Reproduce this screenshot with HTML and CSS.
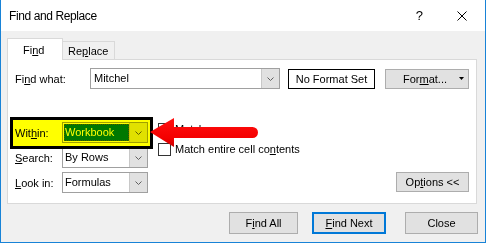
FILE: index.html
```html
<!DOCTYPE html>
<html lang="en">

<head>
    <meta charset="UTF-8">
    <meta name="viewport" content="width=device-width, initial-scale=1.0">
    <title>Find and Replace</title>
    <link rel="stylesheet" href="styles.css">
</head>

<body>
    <div class="window">
        <div class="titlebar">
            <span class="title">Find and Replace</span>
            <span class="help">?</span>
            <svg class="close-x" width="10" height="10" viewBox="0 0 10 10">
                <path d="M0.5 0.5 L9.5 9.5 M9.5 0.5 L0.5 9.5" stroke="#000" stroke-width="1" fill="none"/>
            </svg>
        </div>

        <div class="dialog">
            <div class="tabs">
                <div class="tab active">Fi<u>n</u>d</div>
                <div class="tab">Re<u>p</u>lace</div>
            </div>

            <div class="panel">
                <div class="find-row">
                    <span class="lbl lbl-wide">Fi<u>n</u>d what:</span>
                    <div class="combo combo-find">
                        <span class="combo-text">Mitchel</span>
                        <span class="drop"><svg width="7" height="4" viewBox="0 0 7 4"><polyline points="0.5,0.5 3.5,3.5 6.5,0.5" fill="none" stroke="#606060"/></svg></span>
                    </div>
                    <div class="format-set">No Format Set</div>
                    <button class="btn btn-format"><span>For<u>m</u>at...</span><svg class="caret" width="5" height="3" viewBox="0 0 5 3"><path d="M0 0 H5 L2.5 3 Z" fill="#000"/></svg></button>
                </div>

                <div class="options">
                    <div class="fields">
                        <div class="field highlighted">
                            <span class="lbl">Wit<u>h</u>in:</span>
                            <div class="combo">
                                <span class="combo-text"><span class="sel">Workbook</span></span>
                                <span class="drop"><svg width="7" height="4" viewBox="0 0 7 4"><polyline points="0.5,0.5 3.5,3.5 6.5,0.5" fill="none" stroke="#606060"/></svg></span>
                            </div>
                        </div>
                        <div class="field">
                            <span class="lbl"><u>S</u>earch:</span>
                            <div class="combo">
                                <span class="combo-text">By Rows</span>
                                <span class="drop"><svg width="7" height="4" viewBox="0 0 7 4"><polyline points="0.5,0.5 3.5,3.5 6.5,0.5" fill="none" stroke="#606060"/></svg></span>
                            </div>
                        </div>
                        <div class="field">
                            <span class="lbl"><u>L</u>ook in:</span>
                            <div class="combo">
                                <span class="combo-text">Formulas</span>
                                <span class="drop"><svg width="7" height="4" viewBox="0 0 7 4"><polyline points="0.5,0.5 3.5,3.5 6.5,0.5" fill="none" stroke="#606060"/></svg></span>
                            </div>
                        </div>
                    </div>

                    <div class="checks">
                        <div class="check"><span class="box"></span><span>Matc<u>h</u> case</span></div>
                        <div class="check"><span class="box"></span><span>Match entire cell co<u>n</u>tents</span></div>
                    </div>

                    <button class="btn btn-options">Op<u>t</u>ions &lt;&lt;</button>
                </div>
            </div>

            <div class="actions">
                <button class="btn btn-action">F<u>i</u>nd All</button>
                <button class="btn btn-action btn-default"><u>F</u>ind Next</button>
                <button class="btn btn-action btn-close">Close</button>
            </div>
        </div>

        <!-- red annotation arrow pointing at the Within box -->
        <svg class="arrow" width="116" height="36" viewBox="148 114 116 36">
            <defs>
                <linearGradient id="red" x1="0" y1="0" x2="0" y2="1">
                    <stop offset="0" stop-color="#ff1010"/>
                    <stop offset="0.7" stop-color="#f40000"/>
                    <stop offset="1" stop-color="#c80000"/>
                </linearGradient>
            </defs>
            <path d="M150 132 L174 118 L174 127 L252.5 127 A5.5 5.5 0 0 1 252.5 138 L174 138 L174 147 Z" fill="url(#red)"/>
        </svg>
    </div>
</body>

</html>
```

FILE: styles.css
```css
body {
    margin: 0;
    font-family: "Liberation Sans", Arial, sans-serif;
    font-size: 11px;
    color: #000;
    background: #fff;
}

u {
    text-underline-offset: 1px;
}

.window {
    position: relative;
    width: 486px;
    height: 243px;
    box-sizing: border-box;
    border: 1px solid #1883d7;
    border-top: 0;
    background: #f0f0f0;
    display: flex;
    flex-direction: column;
}

.titlebar {
    height: 31px;
    flex-shrink: 0;
    background: #fff;
    display: flex;
    align-items: center;
    padding-left: 8px;
}

.title {
    flex: 1;
    font-size: 12px;
    letter-spacing: -0.4px;
}

.help {
    font-size: 13px;
    margin-right: 34px;
}

.close-x {
    margin-right: 18px;
}

.dialog {
    flex: 1;
    padding: 7px 7px 0 6px;
}

.tabs {
    display: flex;
    align-items: flex-end;
    height: 21px;
}

.tab {
    box-sizing: border-box;
    border: 1px solid #d9d9d9;
    border-bottom: 0;
    line-height: 14px;
}

.tab.active {
    position: relative;
    width: 56px;
    height: 22px;
    margin-bottom: -1px;
    padding: 4px 0 0 15px;
    background: #fff;
}

.tab:not(.active) {
    width: 52px;
    height: 18px;
    border-left: 0;
    padding: 2px 0 0 5px;
}

.panel {
    width: 470px;
    height: 145px;
    box-sizing: border-box;
    border: 1px solid #d9d9d9;
    background: #fff;
    padding: 8px 7px 0 7px;
}

.find-row {
    display: flex;
    align-items: center;
    height: 21px;
}

.lbl {
    width: 47px;
    flex-shrink: 0;
}

.lbl-wide {
    width: 75px;
}

.combo {
    box-sizing: border-box;
    width: 86px;
    height: 21px;
    border: 1px solid #a0a0a0;
    background: #fff;
    display: flex;
}

.combo-find {
    width: 190px;
    margin-right: 8px;
}

.combo-text {
    flex: 1;
    padding-left: 2px;
    line-height: 19px;
    overflow: hidden;
}

.combo-find .combo-text {
    padding-left: 3px;
}

.drop {
    width: 17px;
    background: #e1e1e1;
    border-left: 1px solid #c8c8c8;
    display: flex;
    align-items: center;
    justify-content: center;
}

.format-set {
    box-sizing: border-box;
    width: 87px;
    height: 20px;
    border: 1px solid #000;
    text-align: center;
    line-height: 18px;
    margin-right: 10px;
}

.btn {
    box-sizing: border-box;
    height: 20px;
    padding: 0;
    background: #e1e1e1;
    border: 1px solid #adadad;
    font-family: inherit;
    font-size: 11px;
    color: #000;
}

.btn-format {
    width: 84px;
    display: flex;
    align-items: center;
    padding-left: 17px;
}

.caret {
    margin-left: 12px;
}

.options {
    display: flex;
    align-items: flex-start;
    margin-top: 33px;
}

.fields {
    display: flex;
    flex-direction: column;
    gap: 4px;
}

.field {
    display: flex;
    align-items: center;
    height: 21px;
}

.highlighted {
    position: relative;
}

/* yellow highlighter frame drawn over the Within row */
.highlighted::after {
    content: "";
    position: absolute;
    top: -5px;
    right: -5px;
    bottom: -6px;
    left: -5px;
    border: 3px solid #000;
    background: #ffff00;
    mix-blend-mode: multiply;
    pointer-events: none;
}

.sel {
    display: block;
    margin: 1px 0 1px 1px;
    padding-left: 1px;
    line-height: 17px;
    background: #0078d7;
    color: #fff;
    outline: 1px dotted #555;
    outline-offset: -1px;
}

.highlighted .combo-text {
    padding-left: 0;
}

.checks {
    display: flex;
    flex-direction: column;
    margin-left: 10px;
    margin-top: -3px;
}

.check {
    display: flex;
    align-items: center;
    height: 20px;
    gap: 4px;
}

.box {
    width: 13px;
    height: 13px;
    box-sizing: border-box;
    border: 1px solid #333;
    background: #fff;
}

.btn-options {
    width: 73px;
    margin-left: auto;
    align-self: flex-end;
    margin-bottom: 1px;
}

.actions {
    display: flex;
    justify-content: flex-end;
    padding-top: 8px;
}

.btn-action {
    height: 22px;
}

.btn-action:first-child {
    width: 69px;
}

.btn-default {
    width: 74px;
    margin-left: 14px;
    border: 2px solid #0078d7;
}

.btn-close {
    width: 73px;
    margin-left: 19px;
}

.arrow {
    position: absolute;
    left: 147px;
    top: 114px;
}
```
